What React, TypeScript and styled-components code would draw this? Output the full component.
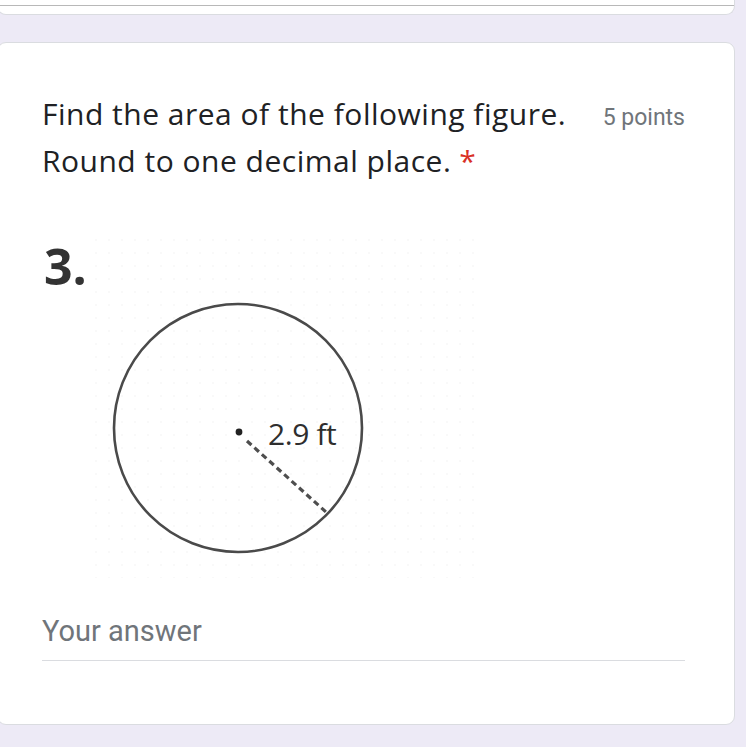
import React from 'react'
import styled, { createGlobalStyle } from 'styled-components'

const GlobalStyle = createGlobalStyle`
	html, body {
		margin: 0;
		padding: 0;
		background: #edeaf6;
		overflow: hidden;
	}
	* {
		box-sizing: border-box;
	}
`

const Page = styled.div`
	width: 738px;
	margin-left: -3px;
	font-family: Roboto, 'Liberation Sans', sans-serif;
	color: #202124;
`

const TopCard = styled.div`
	height: 15px;
	padding-top: 5px;
	background: #ffffff;
	border: 1px solid #dadce0;
	border-top: none;
	border-radius: 0 0 9px 9px;
`

const TopDivider = styled.div`
	border-top: 1px solid #b8b8b8;
`

const Card = styled.div`
	margin-top: 27px;
	height: 683px;
	padding: 47px 49px 0 44px;
	background: #ffffff;
	border: 1px solid #dadce0;
	border-radius: 9px;
`

const Header = styled.div`
	display: flex;
	align-items: baseline;
	justify-content: space-between;
	gap: 20px;
`

const Title = styled.div`
	font-family: 'Open Sans', Roboto, sans-serif;
	font-size: 30px;
	line-height: 47px;
	letter-spacing: 0.5px;
	color: #202124;
`

const Required = styled.span`
	color: #d93025;
	margin-left: 8px;
`

const Points = styled.div`
	font-size: 23px;
	color: #70757a;
	white-space: nowrap;
`

const Figure = styled.svg`
	display: block;
	margin-top: 54px;
	width: 443px;
	height: 340px;
	overflow: visible;
`

const AnswerField = styled.div`
	margin-top: 36px;
	padding-bottom: 12px;
	border-bottom: 1.5px solid #dadce0;
	font-size: 29px;
	line-height: 34px;
	color: #70757a;
`

function CircleFigure() {
	return (
		<Figure viewBox="0 0 443 340">
			<defs>
				<pattern id="dots" width="13" height="13" patternUnits="userSpaceOnUse">
					<circle cx="2" cy="2" r="0.8" fill="#f2f2f2" />
				</pattern>
			</defs>
			<rect x="53" y="0" width="390" height="340" fill="url(#dots)" />
			<text
				x="2"
				y="47"
				fontFamily="'Open Sans', 'DejaVu Sans', sans-serif"
				fontWeight="700"
				fontSize="50"
				fill="#333333"
			>
				3.
			</text>
			<circle cx="196" cy="190" r="124" fill="none" stroke="#4a4a4a" strokeWidth="2.6" />
			<circle cx="197" cy="194" r="3.4" fill="#222222" />
			<line
				x1="205"
				y1="203"
				x2="284"
				y2="274"
				stroke="#4e4e4e"
				strokeWidth="3.2"
				strokeDasharray="6 4"
			/>
			<text
				x="226"
				y="207"
				fontFamily="'Open Sans', 'DejaVu Sans', sans-serif"
				fontSize="30"
				fill="#2e2e2e"
				letterSpacing="-0.4"
			>
				2.9 ft
			</text>
		</Figure>
	)
}

export default function App() {
	return (
		<Page>
			<GlobalStyle />
			<TopCard>
				<TopDivider />
			</TopCard>
			<Card>
				<Header>
					<Title>
						Find the area of the following figure.
						<br />
						Round to one decimal place.<Required>*</Required>
					</Title>
					<Points>5 points</Points>
				</Header>
				<CircleFigure />
				<AnswerField>Your answer</AnswerField>
			</Card>
		</Page>
	)
}
